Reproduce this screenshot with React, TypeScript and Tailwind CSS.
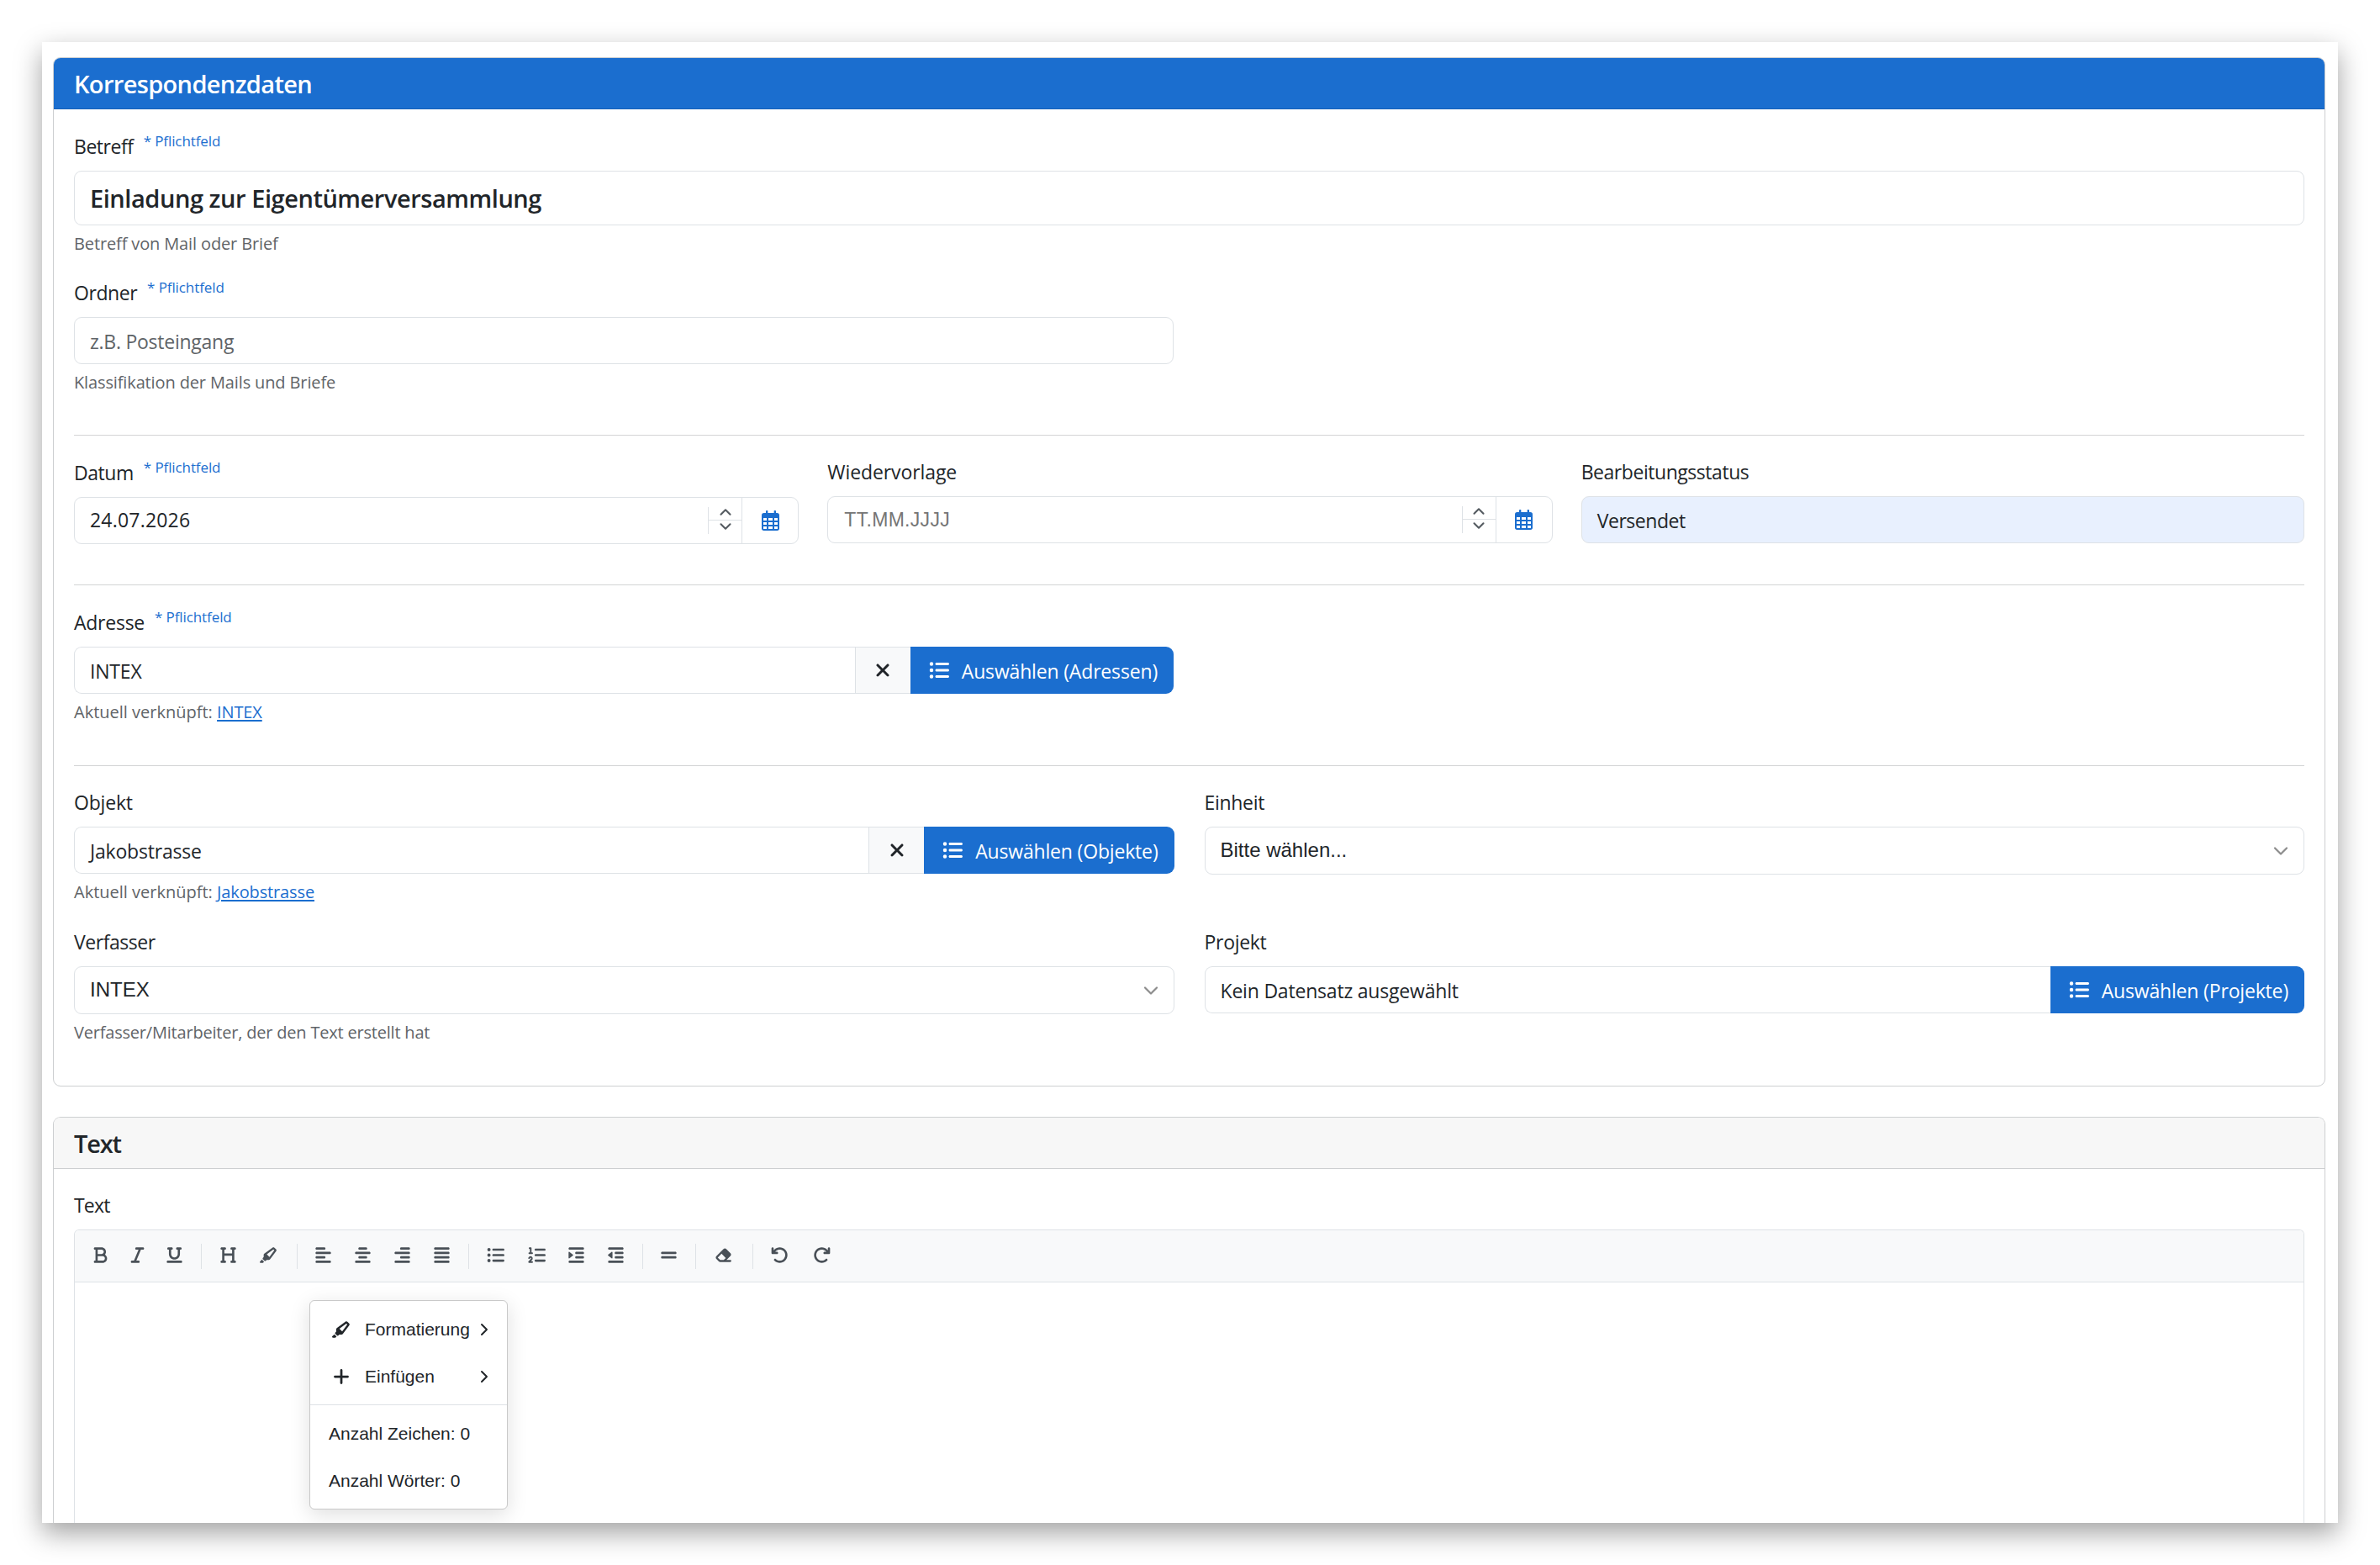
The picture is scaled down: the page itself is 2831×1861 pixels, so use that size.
import type { ReactNode } from 'react';
import {
  FaAlignCenter, FaAlignJustify, FaAlignLeft, FaAlignRight, FaArrowRotateLeft, FaArrowRotateRight,
  FaBold, FaEraser, FaGripLines, FaHeading, FaHighlighter, FaIndent, FaItalic,
  FaListOl, FaListUl, FaOutdent, FaPlus, FaUnderline, FaXmark,
} from 'react-icons/fa6';
import { ChevronDown, ChevronRight, ChevronUp } from 'lucide-react';

interface FieldProps {
  label: string;
  required?: boolean;
  hint?: ReactNode;
  className?: string;
  labelClassName?: string;
  children: ReactNode;
}

// Label, control and optional help text
function Field({ label, required, hint, className = '', labelClassName = 'tracking-[-0.45px]', children }: FieldProps) {
  return (
    <div className={`min-w-0 ${className}`}>
      <div className={`flex ${required ? 'h-[49px]' : 'h-12'}`}>
        <label className={`text-[23px] leading-9 ${required ? 'pt-0.5' : 'pt-px'} ${labelClassName}`}>{label}</label>
        {required && <span className="ml-3 mt-[-4px] text-[17px] leading-9 tracking-[-0.1px] text-[#1b6ecf]">* Pflichtfeld</span>}
      </div>
      {children}
      {hint && <div className="mt-[6px] text-[20px] leading-[31px] tracking-[-0.13px] text-[#5f6468]">{hint}</div>}
    </div>
  );
}

function CalendarIcon() {
  return (
    <svg viewBox="0 0 63 72" className="h-6 w-[21px]">
      <rect x="15" y="0" width="7" height="14" rx="2" fill="currentColor" />
      <rect x="44" y="0" width="7" height="14" rx="2" fill="currentColor" />
      <rect x="0" y="9" width="63" height="63" rx="8" fill="currentColor" />
      {[27, 42, 57].map(y => (
        <g key={y} fill="#fff">
          <rect x="6" y={y} width="12" height="9" />
          <rect x="24" y={y} width="15" height="9" />
          <rect x="45" y={y} width="12" height="9" />
        </g>
      ))}
    </svg>
  );
}

function DateInput({ value, placeholder }: { value?: string; placeholder?: string }) {
  return (
    <div className="-mr-0.5 flex h-14 rounded-[9px] border border-[#dee2e6] bg-white">
      {value ? (
        <div className="flex flex-1 items-center pb-px pl-[18px] text-[23px] tracking-[0.2px]">{value}</div>
      ) : (
        <div className="flex flex-1 items-center pl-[19px] font-['Liberation_Sans',sans-serif] text-[23px] tracking-[0.3px] text-[#757575]">{placeholder}</div>
      )}
      <div className="my-auto flex h-8 w-10 flex-col border-l border-[#dee2e6] text-[#555b61]">
        <div className="flex h-4 items-center justify-center border-b border-[#dee2e6] pb-[3px]">
          <ChevronUp size={22} strokeWidth={2.3} className="shrink-0" />
        </div>
        <div className="flex h-4 items-center justify-center pb-0.5">
          <ChevronDown size={22} strokeWidth={2.3} className="shrink-0" />
        </div>
      </div>
      <div className="flex w-[67px] items-center justify-center border-l border-[#dee2e6] text-[#1b6ecf]">
        <CalendarIcon />
      </div>
    </div>
  );
}

function LookupInput({ value, target, clearable }: { value: string; target: string; clearable?: boolean }) {
  return (
    <div className="flex h-14">
      <div className="flex flex-1 items-center rounded-l-[9px] border border-r-0 border-[#dee2e6] pl-[18px] pt-0.5 text-[23px] tracking-[-0.2px]">
        {value}
      </div>
      {clearable && (
        <div className="flex w-[66px] items-center justify-center border border-r-0 border-[#dee2e6] bg-[#f8f9fa]">
          <FaXmark size={24} />
        </div>
      )}
      <div className="flex items-center rounded-r-[9px] bg-[#1b6ecf] pl-[22px] pr-[19px] text-[23px] tracking-[-0.17px] text-white">
        <FaListUl size={24} className="mr-[15px]" />
        <span className="pt-0.5">Auswählen ({target})</span>
      </div>
    </div>
  );
}

function SelectInput({ value }: { value: string }) {
  return (
    <div className="flex h-[57px] items-center justify-between rounded-[9px] border border-[#dee2e6] pl-[18px] pr-[13px] font-['Liberation_Sans',sans-serif] text-[24px]">
      <span className="pb-px">{value}</span>
      <ChevronDown size={28} strokeWidth={1.9} className="text-[#8d8d8d]" />
    </div>
  );
}

function Linked({ name }: { name: string }) {
  return (
    <>
      <span className="tracking-[0]">Aktuell verknüpft: </span>
      <a className="text-[#1b6ecf] underline decoration-2 underline-offset-2">{name}</a>
    </>
  );
}

const toolbarGroups = [
  [
    { icon: FaBold, width: 'w-[44px]' },
    { icon: FaItalic, width: 'w-[44px]' },
    { icon: FaUnderline, width: 'w-[45px]' },
  ],
  [
    { icon: FaHeading, width: 'w-[48px]' },
    { icon: FaHighlighter, width: 'w-[49px]' },
  ],
  [
    { icon: FaAlignLeft, width: 'w-[47px]' },
    { icon: FaAlignCenter, width: 'w-[47px]' },
    { icon: FaAlignRight, width: 'w-[47px]' },
    { icon: FaAlignJustify, width: 'w-[46px]' },
  ],
  [
    { icon: FaListUl, width: 'w-[49px]' },
    { icon: FaListOl, width: 'w-[48px]' },
    { icon: FaIndent, width: 'w-[47px]' },
    { icon: FaOutdent, width: 'w-[46px]' },
  ],
  [{ icon: FaGripLines, width: 'w-[46px]' }],
  [{ icon: FaEraser, width: 'w-[51px]' }],
  [
    { icon: FaArrowRotateLeft, width: 'w-[49px]' },
    { icon: FaArrowRotateRight, width: 'w-[50px]' },
  ],
];

function ContextMenu() {
  return (
    <div className="absolute left-[279px] top-[21px] w-[236px] rounded-[6px] border border-[#c9c9c9] bg-white pb-[5px] pt-[6px] font-['Liberation_Sans',sans-serif] text-[21px] shadow-[0_6px_24px_rgba(0,0,0,0.13)]">
      <div className="flex h-14 items-center pl-[26px] pr-[15px]">
        <FaHighlighter size={22} className="mr-[17px]" />
        <span className="flex-1">Formatierung</span>
        <ChevronRight size={24} strokeWidth={2} />
      </div>
      <div className="flex h-14 items-center pl-[26px] pr-[15px]">
        <FaPlus size={22} className="mr-[17px]" />
        <span className="flex-1">Einfügen</span>
        <ChevronRight size={24} strokeWidth={2} />
      </div>
      <div className="mb-[6px] mt-[5px] border-t border-[#dee2e6]" />
      <div className="flex h-14 items-center pl-[22px]">Anzahl Zeichen: 0</div>
      <div className="flex h-14 items-center pl-[22px]">Anzahl Wörter: 0</div>
    </div>
  );
}

export default function App() {
  return (
    <div className="h-[1861px] w-[2831px] overflow-hidden bg-white p-[50px] font-['Open_Sans','Noto_Sans',sans-serif] text-[#212529]">
      <div className="h-[1761px] w-[2731px] bg-white shadow-[0_12px_30px_rgba(0,0,0,0.37)]">
        <div className="flex h-full flex-col overflow-hidden pl-[13px] pr-[15px] pt-[18px]">
          {/* Korrespondenzdaten */}
          <section className="h-[1224px] shrink-0 rounded-[9px] border border-[#cdcfd1]">
            <h5 className="h-[61px] rounded-t-[8px] border-b border-[#1560b8] bg-[#1b6ecf] pl-6 text-[29px] font-semibold leading-[62px] tracking-[-0.65px] text-white">
              Korrespondenzdaten
            </h5>
            <div className="px-6 pt-6">
              <Field label="Betreff" required hint="Betreff von Mail oder Brief" className="h-[174px]">
                <div className="flex h-[65px] items-center rounded-[9px] border border-[#dee2e6] pl-[18px] text-[29px] font-semibold tracking-[-0.45px]">
                  Einladung zur Eigentümerversammlung
                </div>
              </Field>
              <Field label="Ordner" required hint="Klassifikation der Mails und Briefe" className="h-[189px] w-[1308px]">
                <div className="flex h-14 items-center rounded-[9px] border border-[#dee2e6] pl-[18px] pt-0.5 text-[23px] tracking-[-0.25px] text-[#5f6468]">
                  z.B. Posteingang
                </div>
              </Field>

              <div className="grid h-[178px] grid-cols-3 gap-9 border-t border-[#d3d4d5] pt-6">
                <Field label="Datum" required>
                  <DateInput value="24.07.2026" />
                </Field>
                <Field label="Wiedervorlage" labelClassName="tracking-[-0.1px]">
                  <DateInput placeholder="TT.MM.JJJJ" />
                </Field>
                <Field label="Bearbeitungsstatus">
                  <div className="flex h-14 items-center rounded-[9px] border border-[#dee2e6] bg-[#e8f0fe] pl-[18px] pt-0.5 text-[23px] tracking-[-0.45px]">
                    Versendet
                  </div>
                </Field>
              </div>

              <div className="h-[215px] border-t border-[#d3d4d5] pt-6">
                <Field label="Adresse" required hint={<Linked name="INTEX" />} className="w-[1308px]" labelClassName="tracking-[-0.25px]">
                  <LookupInput value="INTEX" target="Adressen" clearable />
                </Field>
              </div>

              <div className="border-t border-[#d3d4d5] pt-6">
                <div className="grid h-[166px] grid-cols-2 gap-9">
                  <Field label="Objekt" hint={<Linked name="Jakobstrasse" />} labelClassName="tracking-[-0.2px]">
                    <LookupInput value="Jakobstrasse" target="Objekte" clearable />
                  </Field>
                  <Field label="Einheit" labelClassName="tracking-[-0.3px]">
                    <SelectInput value="Bitte wählen..." />
                  </Field>
                </div>
                <div className="grid grid-cols-2 gap-9">
                  <Field label="Verfasser" hint={<span className="tracking-[-0.2px]">Verfasser/Mitarbeiter, der den Text erstellt hat</span>}>
                    <SelectInput value="INTEX" />
                  </Field>
                  <Field label="Projekt" labelClassName="tracking-[-0.3px]">
                    <LookupInput value="Kein Datensatz ausgewählt" target="Projekte" />
                  </Field>
                </div>
              </div>
            </div>
          </section>

          {/* Text */}
          <section className="mt-9 flex flex-1 flex-col rounded-t-[9px] border border-b-0 border-[#cdcfd1]">
            <h5 className="h-[61px] rounded-t-[8px] border-b border-[#cdcfd1] bg-[#f7f7f7] pl-6 text-[29px] font-semibold leading-[62px] tracking-[-1.2px]">
              Text
            </h5>
            <div className="flex flex-1 flex-col px-6 pt-6">
              <div className="h-12 pt-px text-[23px] leading-9 tracking-[-0.8px]">Text</div>
              <div className="flex flex-1 flex-col rounded-t-[6px] border border-b-0 border-[#dee2e6]">
                <div className="flex h-[62px] items-center rounded-t-[5px] border-b border-[#dee2e6] bg-[#f8f9fa] pl-[8px] text-[#495057]">
                  {toolbarGroups.map((group, index) => (
                    <div key={index} className={`flex h-[30px] items-center ${index > 0 ? 'ml-[9px] border-l border-[#dee2e6] pl-[7px]' : ''}`}>
                      {group.map(({ icon: Icon, width }, i) => (
                        <span key={i} className={`flex justify-center pb-0.5 ${width}`}>
                          <Icon size={21} />
                        </span>
                      ))}
                    </div>
                  ))}
                </div>
                <div className="relative flex-1">
                  <ContextMenu />
                </div>
              </div>
            </div>
          </section>
        </div>
      </div>
    </div>
  );
}
